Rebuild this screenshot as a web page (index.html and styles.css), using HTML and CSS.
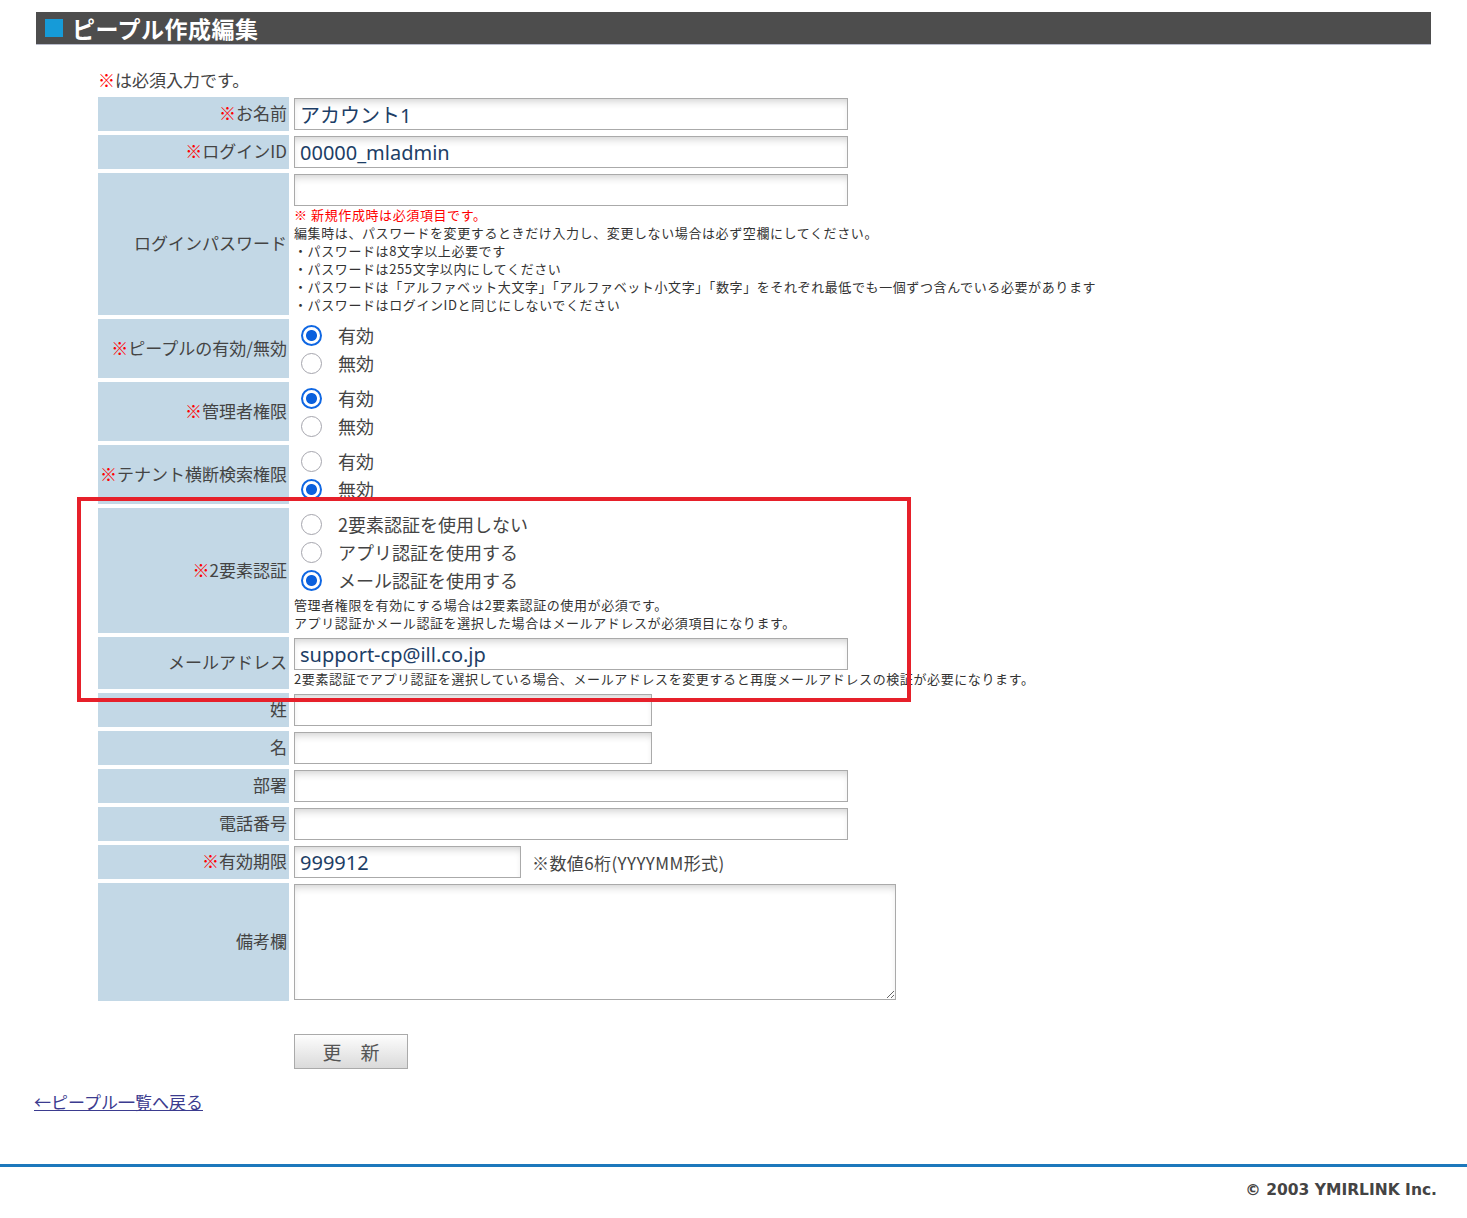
FILE: index.html
```html
<!DOCTYPE html>
<html lang="ja">
<head>
    <meta charset="UTF-8">
    <title>ピープル作成編集</title>
    <link rel="stylesheet" href="styles.css">
</head>
<body>

<div class="page">
    <h1 class="page-title"><span class="title-mark"></span>ピープル作成編集</h1>

    <div class="form-area">
        <p class="required-note"><span class="req">※</span>は必須入力です。</p>

        <table class="edit-table">
            <tr>
                <th><span class="req">※</span>お名前</th>
                <td><input type="text" class="text-input" value="アカウント1"></td>
            </tr>
            <tr>
                <th><span class="req">※</span>ログインID</th>
                <td><input type="text" class="text-input" value="00000_mladmin"></td>
            </tr>
            <tr>
                <th>ログインパスワード</th>
                <td>
                    <input type="password" class="text-input">
                    <div class="hint">
                        <div class="hint-red">※ 新規作成時は必須項目です。</div>
                        <div>編集時は、パスワードを変更するときだけ入力し、変更しない場合は必ず空欄にしてください。</div>
                        <div>・パスワードは8文字以上必要です</div>
                        <div>・パスワードは255文字以内にしてください</div>
                        <div>・パスワードは「アルファベット大文字」「アルファベット小文字」「数字」をそれぞれ最低でも一個ずつ含んでいる必要があります</div>
                        <div>・パスワードはログインIDと同じにしないでください</div>
                    </div>
                </td>
            </tr>
            <tr>
                <th><span class="req">※</span>ピープルの有効/無効</th>
                <td>
                    <div class="options">
                        <label class="option"><input type="radio" name="active" checked><span>有効</span></label>
                        <label class="option"><input type="radio" name="active"><span>無効</span></label>
                    </div>
                </td>
            </tr>
            <tr>
                <th><span class="req">※</span>管理者権限</th>
                <td>
                    <div class="options">
                        <label class="option"><input type="radio" name="admin" checked><span>有効</span></label>
                        <label class="option"><input type="radio" name="admin"><span>無効</span></label>
                    </div>
                </td>
            </tr>
            <tr>
                <th><span class="req">※</span>テナント横断検索権限</th>
                <td>
                    <div class="options">
                        <label class="option"><input type="radio" name="tenant"><span>有効</span></label>
                        <label class="option"><input type="radio" name="tenant" checked><span>無効</span></label>
                    </div>
                </td>
            </tr>
            <tr>
                <th><span class="req">※</span>2要素認証</th>
                <td>
                    <div class="options">
                        <label class="option"><input type="radio" name="twofa"><span>2要素認証を使用しない</span></label>
                        <label class="option"><input type="radio" name="twofa"><span>アプリ認証を使用する</span></label>
                        <label class="option"><input type="radio" name="twofa" checked><span>メール認証を使用する</span></label>
                    </div>
                    <div class="hint">
                        <div>管理者権限を有効にする場合は2要素認証の使用が必須です。</div>
                        <div>アプリ認証かメール認証を選択した場合はメールアドレスが必須項目になります。</div>
                    </div>
                </td>
            </tr>
            <tr>
                <th>メールアドレス</th>
                <td>
                    <input type="text" class="text-input" value="support-cp@ill.co.jp">
                    <div class="hint">
                        <div>2要素認証でアプリ認証を選択している場合、メールアドレスを変更すると再度メールアドレスの検証が必要になります。</div>
                    </div>
                </td>
            </tr>
            <tr>
                <th>姓</th>
                <td><input type="text" class="text-input short"></td>
            </tr>
            <tr>
                <th>名</th>
                <td><input type="text" class="text-input short"></td>
            </tr>
            <tr>
                <th>部署</th>
                <td><input type="text" class="text-input"></td>
            </tr>
            <tr>
                <th>電話番号</th>
                <td><input type="text" class="text-input"></td>
            </tr>
            <tr>
                <th><span class="req">※</span>有効期限</th>
                <td class="inline-cell">
                    <input type="text" class="text-input period" value="999912"><span class="field-note">※数値6桁(YYYYMM形式)</span>
                </td>
            </tr>
            <tr>
                <th>備考欄</th>
                <td><textarea class="memo"></textarea></td>
            </tr>
        </table>

        <div class="submit-row">
            <button type="button" class="submit-btn">更　新</button>
        </div>
    </div>

    <p class="back"><a href="#">←ピープル一覧へ戻る</a></p>
</div>

<footer class="footer">© 2003 YMIRLINK Inc.</footer>

<div class="highlight-box"></div>

</body>
</html>
```

FILE: styles.css
```css
body {
    margin: 0;
    font-family: "Noto Sans CJK JP", sans-serif;
    color: #444;
    background: #fff;
}
.page {
    padding: 12px 36px 0 34px;
}
.page-title {
    display: flex;
    align-items: center;
    gap: 9px;
    height: 32px;
    margin: 0 0 0 2px;
    padding-left: 9px;
    background: #4d4d4d;
    border-bottom: 1px solid #b9bccb;
    color: #fff;
    font-size: 23px;
    font-weight: bold;
    letter-spacing: 0.5px;
}
.title-mark {
    width: 18px;
    height: 18px;
    background: #169bd8;
}
.form-area {
    margin-left: 60px;
}
.required-note {
    margin: 25px 0 3px 4px;
    font-size: 17px;
    line-height: 20px;
    color: #444;
}
.req {
    color: #f00;
}
.edit-table {
    border-collapse: separate;
    border-spacing: 4px;
}
.edit-table th {
    box-sizing: border-box;
    width: 191px;
    min-width: 191px;
    max-width: 191px;
    padding: 0 2px 3px 0;
    background: #c3d8e6;
    font-size: 17px;
    font-weight: normal;
    text-align: right;
    vertical-align: middle;
    white-space: nowrap;
    color: #444;
}
.edit-table td {
    padding: 1px;
    vertical-align: top;
}
.text-input {
    display: block;
    box-sizing: border-box;
    width: 554px;
    height: 32px;
    margin: 0;
    padding: 0 5px;
    border: 1px solid #aaa;
    background: #fff;
    box-shadow: inset 0 6px 8px -4px rgba(0, 0, 0, 0.2);
    font-family: "Noto Sans", "Noto Sans CJK JP", sans-serif;
    font-size: 20px;
    color: #1d3e66;
    outline: none;
}
.text-input.short {
    width: 358px;
}
.text-input.period {
    display: inline-block;
    width: 227px;
    vertical-align: middle;
}
.field-note {
    margin-left: 11px;
    font-size: 17px;
    letter-spacing: 0.4px;
    vertical-align: middle;
    color: #444;
}
.hint {
    font-size: 13px;
    line-height: 18px;
    letter-spacing: 0.6px;
    color: #333;
    white-space: nowrap;
}
.hint-red {
    color: #f00;
}
.options {
    padding: 1px 0 0;
}
.options + .hint {
    margin-top: 2px;
}
.option {
    display: flex;
    align-items: center;
    height: 28px;
    padding-left: 7px;
    font-size: 18px;
    color: #444;
}
.option input {
    appearance: none;
    box-sizing: border-box;
    width: 21px;
    height: 21px;
    margin: 0 16px 0 0;
    border: 1px solid #a5a5ad;
    border-radius: 50%;
    background: #fff;
}
.option input:checked {
    border: 2px solid #0f67e3;
    background: radial-gradient(circle, #0a60dd 0 5px, #fff 6px);
}
.memo {
    display: block;
    box-sizing: border-box;
    width: 602px;
    height: 116px;
    margin: 0;
    border: 1px solid #aaa;
    box-shadow: inset 0 6px 8px -4px rgba(0, 0, 0, 0.2);
    resize: both;
}
.submit-row {
    margin: 29px 0 0 200px;
}
.submit-btn {
    box-sizing: border-box;
    width: 114px;
    height: 35px;
    border: 1px solid #aaa;
    background: linear-gradient(#fdfdfd, #dadada);
    font-family: "Noto Sans CJK JP", sans-serif;
    font-size: 19px;
    color: #555;
    cursor: pointer;
}
.back {
    margin: 23px 0 0;
    font-size: 17px;
    line-height: 20px;
}
.back a {
    color: #3b3b8f;
}
.footer {
    margin-top: 52px;
    padding: 13px 30px 12px 0;
    border-top: 3px solid #1c78bc;
    text-align: right;
    font-family: "DejaVu Sans", sans-serif;
    font-size: 15.5px;
    font-weight: bold;
    line-height: 20px;
    color: #444;
}
.highlight-box {
    position: absolute;
    left: 77px;
    top: 497px;
    width: 834px;
    height: 205px;
    box-sizing: border-box;
    border: 4px solid #e6202a;
    pointer-events: none;
}
```
